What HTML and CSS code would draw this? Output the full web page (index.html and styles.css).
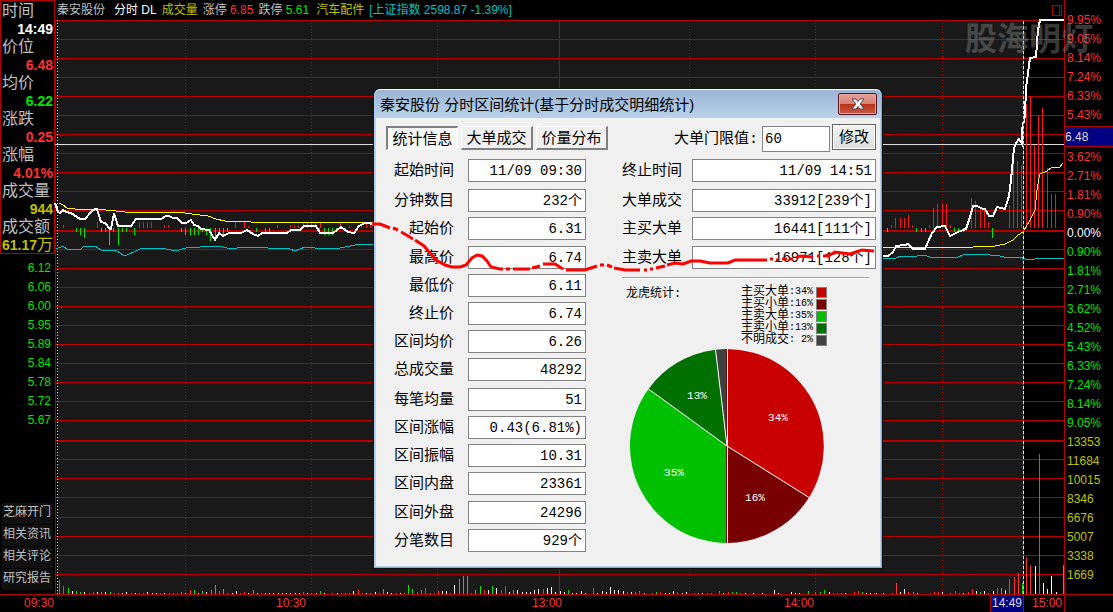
FILE: index.html
```html
<!DOCTYPE html>
<html lang="zh-CN">
<head>
<meta charset="utf-8">
<title>秦安股份 分时</title>
<link rel="stylesheet" href="styles.css">
</head>
<body>
<div class="app">
  <aside class="side">
    <dl class="quote">
      <dt>时间</dt><dd class="white">14:49</dd>
      <dt>价位</dt><dd class="red">6.48</dd>
      <dt>均价</dt><dd class="green">6.22</dd>
      <dt>涨跌</dt><dd class="red">0.25</dd>
      <dt>涨幅</dt><dd class="red">4.01%</dd>
      <dt>成交量</dt><dd class="yellow">944</dd>
      <dt>成交额</dt><dd class="yellow">61.17<span class="unit">万</span></dd>
    </dl>
    <ul class="prices green">
      <li>6.12</li><li>6.06</li><li>6.00</li><li>5.95</li><li>5.89</li><li>5.84</li><li>5.78</li><li>5.72</li><li>5.67</li>
    </ul>
    <nav class="links">
      <a href="#">芝麻开门</a><a href="#">相关资讯</a><a href="#">相关评论</a><a href="#">研究报告</a>
    </nav>
  </aside>

  <header class="head">
    <span class="name">秦安股份</span>
    <span class="white">分时 DL</span>
    <span class="yellow">成交量</span>
    <span>涨停 <b class="red">6.85</b></span>
    <span>跌停 <b class="green">5.61</b></span>
    <span class="yellow sector">汽车配件</span>
    <span class="cyan">[上证指数 2598.87 -1.39%]</span>
    <svg class="pane-icon" width="10" height="11" viewBox="0 0 10 11" aria-hidden="true"><path d="M.5 .5h9v10h-9zM7.5 0v11"/></svg>
  </header>

  <main class="chart">
    <svg id="plot" viewBox="55 20 1009 574" preserveAspectRatio="none" role="img" aria-label="分时走势">
      <rect class="range" x="58" y="20" width="965" height="574"/>
      <g id="grid"></g>
      <path class="grid-line" d="M55.5 20V594M559.5 20V594"/>
      <path class="grid-dot" d="M185.5 23V594M311.5 23V594M437.5 23V594M689.5 23V594M815.5 23V594M942.5 23V594"/>
      <path class="open-line" d="M57.5 20V594"/>
      <path class="cursor" d="M55 144.5H1064"/>
      <g id="bars"></g>
      <path class="line cyan-line" d="M56 249L63 246 67 249 80 250 84 246 95 246 101 250 117 251 123 255 127 255 136 251 142 248 162 248 175 251 190 247 200 247 220 246 230 249 245 247 290 249 295 251 305 247 325 249 340 248 355 245 374 244M882 258H896L901 256 910 257 924 255 930 257H958L963 255 980 254 1000 256 1008 258 1020 257 1025 259H1035L1040 258H1060L1064 259"/>
      <path class="line yellow-line" d="M59 203L63 205 67 208 75 209 97 209 125 212 178 212 192 214 208 216 216 219 225 221 251 222 345 222 374 223M882 247H973L978 246H995L1005 244 1013 240 1018 235 1023 232 1030 220 1035 210 1037 190 1039 178 1040 174 1047 171 1052 167H1060L1063 163"/>
      <path class="line price-line" d="M55 203L58 212 60 213 63 210 66 212 71 213 77 217 80 219H85L91 212 95 209H97L101 222 105 223 110 229H111L114 213 118 226H131L136 219H161L166 216H169L173 218H177L182 223H186L191 220 194 225 198 226 201 229 209 230 212 235 215 240 219 233 223 236 229 233H241L247 230 253 234 258 236 262 233H287L291 230 293 230 300 230 304 226H316L320 233H333L341 227 348 232 354 233 359 226 365 223 370 223 374 226M882 256H888L893 252 896 246 905 245 908 244 913 249H925L928 242 932 233 937 227 945 226 950 236 958 232 966 229 970 217 973 206H977L983 209H985L989 216H993L997 207 1005 209 1009 196 1011 180 1014 148 1016 143 1019 139 1022 144 1022 130 1025 115 1026 88 1030 58 1036 57 1038 30 1040 20H1064"/>
      <path class="now" d="M1023.5 21V594"/><path class="now-blue" d="M1023.5 24V594"/>
    </svg>
  </main>

  <ol class="axis">
    <li class="red">9.95%</li><li class="red">9.05%</li><li class="red">8.14%</li><li class="red">7.24%</li><li class="red">6.33%</li><li class="red">5.43%</li><li class="tag">6.48</li><li class="red">3.62%</li><li class="red">2.71%</li><li class="red">1.81%</li><li class="red">0.90%</li><li class="white">0.00%</li>
    <li class="green">0.90%</li><li class="green">1.81%</li><li class="green">2.71%</li><li class="green">3.62%</li><li class="green">4.52%</li><li class="green">5.43%</li><li class="green">6.33%</li><li class="green">7.24%</li><li class="green">8.14%</li><li class="green">9.05%</li>
    <li class="yellow">13353</li><li class="yellow">11684</li><li class="yellow">10015</li><li class="yellow">8346</li><li class="yellow">6676</li><li class="yellow">5007</li><li class="yellow">3338</li><li class="yellow">1669</li>
  </ol>

  <footer class="times">
    <time>09:30</time><time>10:30</time><time>13:00</time><time>14:00</time><time class="current">14:49</time><time class="close-time">15:00</time>
  </footer>

  <div class="watermark">股海明灯</div>

  <section class="dialog" role="dialog" aria-labelledby="dlg-title">
    <div class="titlebar">
      <h1 id="dlg-title">秦安股份 分时区间统计(基于分时成交明细统计)</h1>
      <button class="close" type="button" aria-label="关闭"><svg width="14" height="12" viewBox="0 0 14 12" aria-hidden="true"><path d="M1 1h4l2 2.500 2-2.500h4L9.200 6 13 11H9L7 8.500 5 11H1L4.800 6z"/></svg></button>
    </div>
    <div class="content">
      <div class="toolbar">
        <div class="tabs">
          <button class="tab active" type="button">统计信息</button>
          <button class="tab" type="button">大单成交</button>
          <button class="tab" type="button">价量分布</button>
        </div>
        <form class="limit">
          <label for="limit">大单门限值:</label>
          <input id="limit" value="60">
          <button type="button">修改</button>
        </form>
      </div>
      <div class="columns">
        <div class="fields">
          <div class="field"><label for="a1">起始时间</label><input id="a1" readonly value="11/09 09:30"></div>
          <div class="field"><label for="a2">分钟数目</label><input id="a2" class="with-unit" readonly value="232个"></div>
          <div class="field"><label for="a3">起始价</label><input id="a3" readonly value="6.31"></div>
          <div class="field"><label for="a4">最高价</label><input id="a4" readonly value="6.74"></div>
          <div class="field"><label for="a5">最低价</label><input id="a5" readonly value="6.11"></div>
          <div class="field"><label for="a6">终止价</label><input id="a6" readonly value="6.74"></div>
          <div class="field"><label for="a7">区间均价</label><input id="a7" readonly value="6.26"></div>
          <div class="field"><label for="a8">总成交量</label><input id="a8" readonly value="48292"></div>
          <div class="field"><label for="a9">每笔均量</label><input id="a9" readonly value="51"></div>
          <div class="field"><label for="a10">区间涨幅</label><input id="a10" readonly value="0.43(6.81%)"></div>
          <div class="field"><label for="a11">区间振幅</label><input id="a11" readonly value="10.31"></div>
          <div class="field"><label for="a12">区间内盘</label><input id="a12" readonly value="23361"></div>
          <div class="field"><label for="a13">区间外盘</label><input id="a13" readonly value="24296"></div>
          <div class="field"><label for="a14">分笔数目</label><input id="a14" class="with-unit" readonly value="929个"></div>
        </div>
        <div class="right">
          <div class="fields wide">
            <div class="field"><label for="b1">终止时间</label><input id="b1" readonly value="11/09 14:51"></div>
            <div class="field"><label for="b2">大单成交</label><input id="b2" class="with-unit" readonly value="33912[239个]"></div>
            <div class="field"><label for="b3">主买大单</label><input id="b3" class="with-unit" readonly value="16441[111个]"></div>
            <div class="field"><label for="b4">主卖大单</label><input id="b4" class="with-unit" readonly value="16971[128个]"></div>
          </div>
          <hr>
          <div class="summary">
            <h2>龙虎统计:</h2>
            <ul class="legend">
              <li>主买大单<span>:34%</span><i class="c1"></i></li>
              <li>主买小单<span>:16%</span><i class="c2"></i></li>
              <li>主卖大单<span>:35%</span><i class="c3"></i></li>
              <li>主卖小单<span>:13%</span><i class="c4"></i></li>
              <li>不明成交<span>: 2%</span><i class="c5"></i></li>
            </ul>
          </div>
          <svg class="pie" width="196" height="196" viewBox="-98 -98 196 196" role="img" aria-label="龙虎统计">
            <path class="c1" d="M0 0V-97A97 97 0 0 1 82 51.500z"/>
            <path class="c2" d="M0 0L82 51.500A97 97 0 0 1 0 97z"/>
            <path class="c3" d="M0 0V97A97 97 0 0 1-78.500-57z"/>
            <path class="c4" d="M0 0L-78.500-57A97 97 0 0 1-11.500-96.300z"/>
            <path class="c5" d="M0 0L-11.500-96.300A97 97 0 0 1 0-97z"/>
            <path class="seam" d="M-.5-97V97"/>
            <path class="cut" d="M.5-97V97M0 0L82 51.500M0 0L-78.500-57M0 0L-11.500-96.300"/>
            <text x="51" y="-25">34%</text><text x="28" y="55">16%</text><text x="-53" y="30">35%</text><text x="-30" y="-47">13%</text>
          </svg>
        </div>
      </div>
    </div>
  </section>

  <svg class="marker" viewBox="0 0 1113 612" preserveAspectRatio="none" aria-hidden="true">
    <path d="M372 224H380L385 226 390 228M393 228L398 230M401 232L403 233 413 239M415 240L424 246 430 253 436 260 445 265 452 267H460L466 265 472 258 477 255 482 256 487 261 491 267 500 269H503M506 269H510M513 269H530M532 268L540 266M543 264H555L563 269M566 270H585L597 266M600 265H604M607 265L612 267M614 268L625 270H640M644 270H647M650 269H653M656 268L665 266M667 265L675 263 683 264 691 261H700L710 263H728L735 260H767M770 259H773M776 260H778M782 259H787M790 259H793M796 258L800 256 813 257M817 256H820M823 256H828L835 252 850 254 862 250 874 251"/>
  </svg>
</div>
<script src="chart.js"></script>
</body>
</html>
```
FILE: styles.css
```css
* { box-sizing: border-box; }
body {
  margin: 0;
  background: #000;
  color: #c0c0c0;
  font: 12px/16px "Liberation Sans", "Noto Sans CJK SC", sans-serif;
}
ul, ol, dl, dd, h1, h2 { margin: 0; padding: 0; list-style: none; }
b { font-weight: normal; }

.white { color: #fff; }
.red { color: #ff3232; }
.green { color: #00e600; }
.yellow { color: #c0c000; }
.cyan { color: #00c0c0; }

.app {
  position: relative;
  display: grid;
  grid-template-columns: 55px minmax(0, 1fr) 49px;
  grid-template-rows: 20px minmax(0, 1fr) 18px;
  min-height: 612px;
  height: 100vh;
  overflow: hidden;
}

/* left quote column */
.side {
  grid-row: 1 / 3;
  display: flex;
  flex-direction: column;
  padding-bottom: 4px;
}
.quote {
  border: 1px solid #b40000;
  padding: 1px 1px 0 1px;
  height: 254px;
}
.quote dt { font-size: 16px; line-height: 18px; }
.quote dd {
  font-size: 14px;
  line-height: 18px;
  font-weight: bold;
  text-align: right;
  white-space: nowrap;
}
.unit { font-size: 16px; font-weight: normal; }
.prices { padding: 5px 4px 0 0; text-align: right; }
.prices li { line-height: 19px; }
.links {
  margin-top: auto;
  padding: 0 2px;
  display: flex;
  flex-direction: column;
  gap: 1px;
}
.links a {
  background: #101010;
  color: #c0c0c0;
  line-height: 18px;
  height: 21px;
  text-decoration: none;
  padding-left: 1px;
}

/* header */
.head {
  display: flex;
  align-items: center;
  gap: 5px;
  padding-left: 2px;
  padding-right: 2px;
  white-space: nowrap;
}
.name { margin-right: 4px; }
.sector { margin-left: 2px; }
.pane-icon { margin-left: auto; }
.pane-icon path { fill: none; stroke: #b40000; shape-rendering: crispEdges; }

/* plot */
.chart { min-width: 0; }
.chart svg {
  display: block;
  width: 100%;
  height: 100%;
  overflow: visible;
  shape-rendering: crispEdges;
}
.range { fill: #191919; }
.chart path { fill: none; }
.grid-line { stroke: #b40000; stroke-width: 1; }
.grid-line.bold { stroke-width: 2; }
.grid-dot { stroke: #b40000; stroke-dasharray: 1 2; }
.open-line { stroke: #ffff3c; stroke-dasharray: 1 2; }
.cursor { stroke: #dcdcdc; }
.bar-r { stroke: #ff1414; }
.bar-v { stroke: #ff3232; }
.bar-g { stroke: #00e600; }
.bar-w { stroke: #fff; }
.cyan-line { stroke: #00c0c0; }
.yellow-line { stroke: #ff0; }
.price-line { stroke: #fff; stroke-width: 2; }
.now { stroke: #dcdcdc; stroke-dasharray: 3 2; }
.now-blue { stroke: #3c3cc8; stroke-dasharray: 2 3; }

/* right scale */
.axis {
  grid-column: 3;
  grid-row: 1 / 4;
  display: flex;
  flex-direction: column;
  padding: 10px 0 28px;
  border-left: 1px solid #b40000;
}
.axis li {
  flex: 1;
  display: flex;
  align-items: center;
  padding-left: 2px;
}
.axis .tag {
  background: #000080;
  color: #dcdcdc;
  border: solid #b40000;
  border-width: 1px 0;
  padding-left: 0;
  margin: 2px 0 0;
}

/* time scale */
.times {
  grid-column: 1 / 4;
  grid-row: 3;
  display: grid;
  grid-template-columns: 252fr 256fr 252fr 206fr 42fr 81fr;
  padding-left: 24px;
  border-top: 1px solid #b40000;
  color: #ff3232;
  line-height: 16px;
}
.times .current {
  justify-self: start;
  width: 34px;
  text-align: center;
  background: #000080;
  color: #dcdcdc;
  border: solid #b40000;
  border-width: 0 1px;
}

.watermark {
  position: absolute;
  right: 20px;
  top: 14px;
  font: bold 32px/44px "Noto Sans CJK SC", sans-serif;
  color: rgba(150, 150, 150, .4);
}

/* dialog window */
.dialog {
  position: absolute;
  left: 374px;
  top: 89px;
  width: 508px;
  padding-bottom: 15px;
  background: #f0f0f0;
  color: #000;
  border: 1px solid #46c8e6;
  border-left-color: #b4d2f0;
  border-top-color: #fff;
  border-radius: 6px 6px 0 0;
  box-shadow: inset -1px -1px #b9d1ea, inset 1px 0 #b9d1ea, 0 0 0 1px #111;
  font: 15px/20px "Liberation Mono", "Noto Sans CJK SC", monospace;
}
.titlebar {
  display: flex;
  justify-content: space-between;
  height: 28px;
  padding: 3px 4px 0 5px;
  background: linear-gradient(#9ab4d2, #b9d1ea);
  border-radius: 5px 5px 0 0;
}
.titlebar h1 {
  font: 15px/24px "Liberation Sans", "Noto Sans CJK SC", sans-serif;
}
.close {
  width: 39px;
  height: 22px;
  padding: 0;
  border: 1px solid #501420;
  border-radius: 2px;
  background: linear-gradient(#e6a096, #d78278 48%, #b93218 52%, #c85a46);
  box-shadow: inset 0 0 0 1px #eba89c;
  display: flex;
  align-items: center;
  justify-content: center;
}
.close path { fill: #fff; stroke: #50465a; }
.content { padding: 6px 5px 0 11px; }
.toolbar { display: flex; justify-content: space-between; height: 35px; }
.tabs { display: flex; gap: 3px; padding-top: 2px; align-items: flex-start; }
.tab {
  width: 72px;
  height: 24px;
  padding: 3px 0 0;
  font: inherit;
  background: #f0f0f0;
  border: solid;
  border-width: 1px 2px 2px 1px;
  border-color: #fff #808080 #808080 #fff;
}
.tab.active {
  background: #f8f8f8;
  border-width: 2px 1px 1px 2px;
  border-color: #808080 #fff #fff #808080;
}
.limit { display: flex; gap: 2px; align-items: flex-start; }
.limit label { line-height: 32px; margin-right: 2px; }
.limit input {
  width: 68px;
  height: 26px;
  margin-top: 2px;
  padding: 0 2px;
  border: 1px solid #828282;
  font: 14px/20px "Liberation Mono", monospace;
}
.limit button {
  width: 44px;
  height: 26px;
  padding: 3px 0 0;
  font: inherit;
  border: 1px solid #646464;
  background: linear-gradient(#f4f4f4, #dcdcdc);
  box-shadow: inset 0 0 0 1px #fff;
}
.columns { display: flex; justify-content: space-between; padding-left: 8px; }
.fields { display: flex; flex-direction: column; gap: 5px; }
.field { display: flex; justify-content: flex-end; gap: 14px; }
.fields .field:nth-child(1), .fields .field:nth-child(8) { margin-bottom: 2px; }
.fields .field:nth-child(3), .fields .field:nth-child(12) { margin-bottom: 1px; }
.field label { line-height: 20px; padding-top: 3px; }
.field input {
  width: 118px;
  height: 23px;
  padding: 0 3px;
  border: 1px solid #828282;
  background: #fff;
  color: #000;
  text-align: right;
  font: 14px/20px "Liberation Mono", "Noto Sans CJK SC", monospace;
}
.field .with-unit { padding-bottom: 4px; }
.wide .field { gap: 10px; }
.wide .field input { width: 184px; }
.right { width: 254px; }
.right hr {
  margin: 8px 7px 7px 0;
  border: 0;
  border-top: 1px solid #a0a0a0;
  border-bottom: 1px solid #fff;
}
.summary { display: flex; justify-content: space-between; padding: 0 49px 0 4px; }
.summary h2 {
  font: 12px/16px "Liberation Mono", "Noto Sans CJK SC", monospace;
}
.legend { font-size: 12px; line-height: 12px; }
.legend li { display: flex; align-items: center; height: 12px; }
.legend span { font-size: 10px; white-space: pre; }
.legend i {
  width: 11px;
  height: 11px;
  margin-left: 3px;
  border: 1px solid #828282;
}
.c1 { fill: #c80000; background: #c80000; }
.c2 { fill: #780000; background: #780000; }
.c3 { fill: #00c000; background: #00c000; }
.c4 { fill: #007000; background: #007000; }
.c5 { fill: #404040; background: #404040; }
.pie { display: block; margin: 2px 0 0 7px; }
.pie .cut { stroke: #fff; }
.pie .seam { stroke: #780000; }
.pie text {
  fill: #fff;
  font: 11px "Liberation Mono", monospace;
  text-anchor: middle;
}

.marker {
  position: absolute;
  inset: 0;
  width: 100%;
  height: 100%;
  pointer-events: none;
}
.marker path { fill: none; stroke: #f00; stroke-width: 3; }
```
FILE: chart.js
```js
const NS = "http://www.w3.org/2000/svg";

function addPath(parent, cls, d) {
  const p = document.createElementNS(NS, "path");
  p.setAttribute("class", cls);
  p.setAttribute("d", d);
  parent.appendChild(p);
}

// horizontal grid
const grid = document.getElementById("grid");
const rows = [20, 39, 58, 77, 96, 115, 134, 153, 172, 191, 210, 249, 268, 287, 306, 325, 344, 363, 382, 401, 420, 459, 478, 497, 517, 536, 555, 574];
addPath(grid, "grid-line", rows.map(y => `M55 ${y + 0.5}H1064`).join(""));
addPath(grid, "grid-line bold", "M55 231H1064M55 441H1064");

// "x:height" lists; a negative height hangs below the base
function bars(cls, base, list) {
  const d = list.trim().split(/\s+/).map(item => {
    const [x, h] = item.split(":").map(Number);
    return `M${x + 0.5} ${base}v${-h}`;
  }).join("");
  addPath(document.getElementById("bars"), cls, d);
}

bars("bar-r", 228, "63:3 97:6 130:2 139:6 143:6 147:6 151:6 164:3 168:3 235:6 244:6 248:2 277:3 290:3 294:3 298:3 303:6 307:6 311:6 315:6 320:6 340:6 349:2 361:2 366:6 370:5 891:3 895:10 900:10 904:10 908:13 912:3 929:3 933:20 937:24 942:24 946:24 950:3 971:30 975:27 980:20 984:20 988:6 1009:23 1013:70 1017:67 1021:63 1026:124 1030:132 1034:83 1038:113 1042:120 1047:60 1051:34 1055:34");
bars("bar-g", 228, "76:-4 80:-7 84:-10 101:-4 105:-4 109:-17 113:-4 118:-17 122:-4 126:-4 134:-7 181:-4 185:-7 190:-7 194:-7 198:-7 202:-4 206:-7 210:-13 215:-13 219:-7 223:-7 227:-4 256:-4 265:-4 269:-4 319:-4 324:-7 328:-7 332:-7 336:-4 345:-4 887:-4 916:-4 921:-4 925:-4 954:-4 958:-4 963:-4 992:-10");

bars("bar-v", 594, "59:14 63:8 89:1 93:2 114:1 131:1 139:1 143:1 160:1 169:1 177:1 190:4 219:3 227:1 240:1 244:2 261:1 303:2 311:1 332:1 341:1 358:4 362:1 379:1 396:1 417:2 425:6 434:1 438:3 471:1 484:4 501:4 505:8 543:5 593:6 627:2 639:3 652:1 660:2 677:2 694:1 707:1 719:3 728:2 740:1 815:2 833:1 837:1 841:1 854:2 858:3 892:1 896:11 908:2 930:1 934:2 938:2 955:3 959:1 968:2 972:5 997:6 1009:15 1014:17 1018:21 1026:37 1030:29 1039:140");
bars("bar-g", 594, "68:6 76:3 80:2 101:2 110:2 118:1 173:1 181:2 194:4 202:3 211:4 215:9 223:5 253:4 320:3 345:1 349:1 370:1 383:5 404:1 408:9 412:5 421:4 430:1 450:1 459:15 463:18 467:18 475:4 480:8 492:8 513:4 568:4 635:2 656:2 698:1 711:1 732:2 736:2 808:3 820:2 824:4 862:2 874:1 913:2 950:1 980:2 988:1 1001:6 1022:11 1063:29");
bars("bar-w", 594, "72:3 84:2 97:2 105:2 122:1 126:2 135:1 147:2 152:1 156:1 164:1 185:1 198:1 206:2 232:1 236:3 248:1 257:1 265:1 269:1 273:1 278:1 282:1 286:1 290:1 295:1 299:1 307:1 316:1 324:1 337:1 353:3 366:1 375:2 387:2 391:1 400:1 442:3 446:3 454:9 488:4 496:6 509:2 517:4 522:2 526:2 530:2 534:4 538:5 547:6 551:7 555:2 560:3 564:2 572:1 576:1 581:3 585:1 597:1 602:3 606:2 610:7 614:4 618:4 623:3 631:2 644:1 665:1 669:1 673:3 682:1 686:2 702:1 723:1 745:1 753:1 762:1 774:4 778:1 791:2 795:1 799:1 829:2 845:1 866:1 870:1 876:1 883:1 900:2 904:5 917:1 942:2 963:1 976:3 984:3 993:3 1005:4 1035:28 1043:11 1047:5 1051:18 1056:2");
```
